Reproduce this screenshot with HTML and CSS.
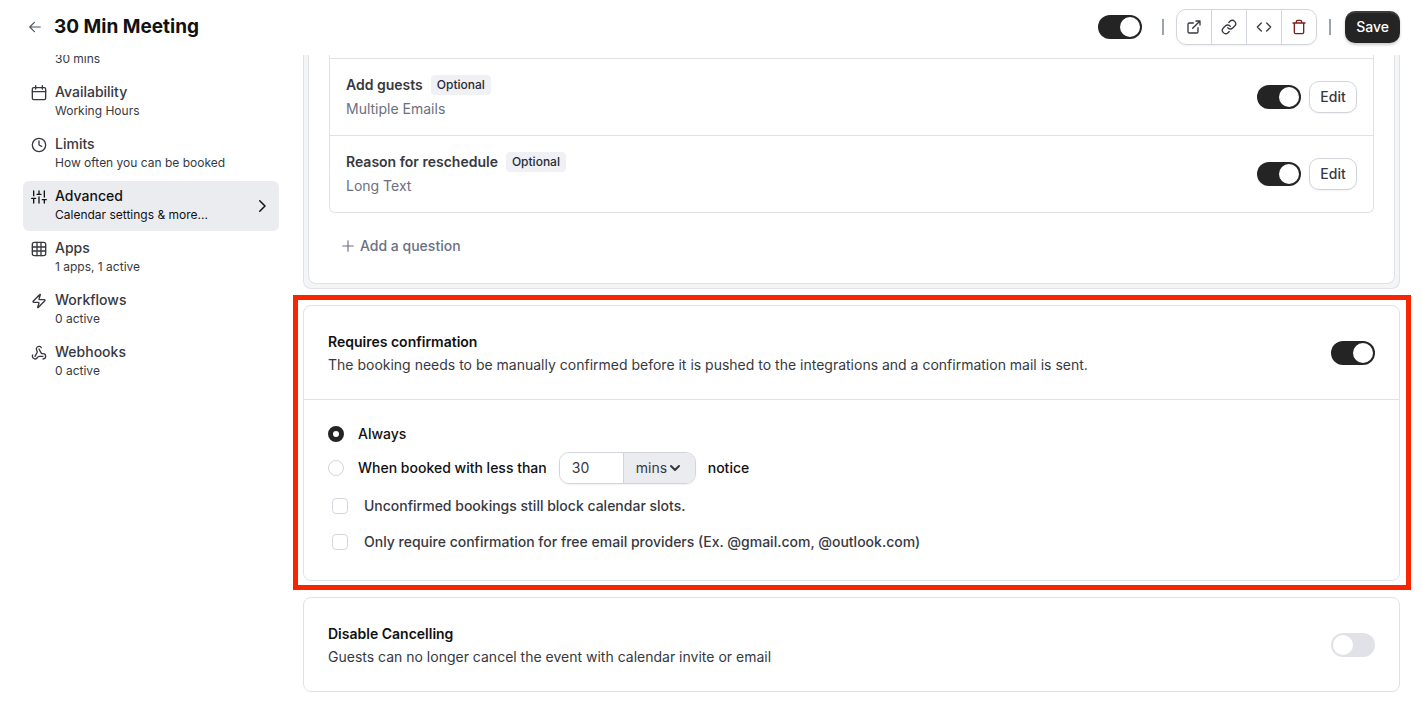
FILE: index.html
```
<!DOCTYPE html>
<html lang="en">

<head>
    <meta charset="UTF-8">
    <meta name="viewport" content="width=device-width, initial-scale=1.0">
    <title>30 Min Meeting</title>
    <link rel="stylesheet" href="styles.css">
</head>

<body>

    <header class="topbar">
        <a href="#" class="back" aria-label="Back">
            <svg class="icon-back" viewBox="0 0 24 24"><path d="m11 20-8-8 8-8M21 12H3" /></svg>
        </a>
        <h1>30 Min Meeting</h1>
        <div class="actions">
            <input type="checkbox" role="switch" class="toggle" aria-label="Event enabled" checked>
            <span class="separator separator-first"></span>
            <div class="button-group">
                <button type="button" aria-label="Preview">
                    <svg viewBox="0 0 24 24"><path d="M18 13v6a2 2 0 0 1-2 2H5a2 2 0 0 1-2-2V8a2 2 0 0 1 2-2h6M15 3h6v6M10 14 21 3" /></svg>
                </button>
                <button type="button" aria-label="Copy link">
                    <svg viewBox="0 0 24 24"><path d="M10 13a5 5 0 0 0 7.54.54l3-3a5 5 0 0 0-7.07-7.07l-1.72 1.71" /><path d="M14 11a5 5 0 0 0-7.54-.54l-3 3a5 5 0 0 0 7.07 7.07l1.71-1.71" /></svg>
                </button>
                <button type="button" aria-label="Embed">
                    <svg viewBox="0 0 24 24"><path d="m16 18 6-6-6-6M8 6l-6 6 6 6" /></svg>
                </button>
                <button type="button" class="danger" aria-label="Delete">
                    <svg viewBox="0 0 24 24"><path d="M3 6h18M19 6v14a2 2 0 0 1-2 2H7a2 2 0 0 1-2-2V6M8 6V4a2 2 0 0 1 2-2h4a2 2 0 0 1 2 2v2" /></svg>
                </button>
            </div>
            <span class="separator"></span>
            <button type="button" class="save">Save</button>
        </div>
    </header>

    <div class="layout">
        <nav class="sidebar">
            <a href="#" class="nav-item nav-first">
                <span class="nav-text"><span class="nav-info">30 mins</span></span>
            </a>
            <a href="#" class="nav-item">
                <svg viewBox="0 0 24 24"><rect x="2" y="4" width="20" height="18" rx="2" /><path d="M17 1v5M7 1v5M2 10h20" /></svg>
                <span class="nav-text"><span class="nav-name">Availability</span><span class="nav-info">Working Hours</span></span>
            </a>
            <a href="#" class="nav-item">
                <svg viewBox="0 0 24 24"><circle cx="12" cy="12" r="10" /><path d="M12 6v6l4 2" /></svg>
                <span class="nav-text"><span class="nav-name">Limits</span><span class="nav-info">How often you can be booked</span></span>
            </a>
            <a href="#" class="nav-item active" aria-current="page">
                <svg viewBox="0 0 24 24"><path d="M4 21v-7M4 10V3M12 21v-9M12 8V3M20 21v-5M20 12V3M1 14h6M9 8h6M17 16h6" /></svg>
                <span class="nav-text"><span class="nav-name">Advanced</span><span class="nav-info">Calendar settings &amp; more...</span></span>
                <svg class="chevron" viewBox="0 0 24 24"><path d="m9 19 7-7-7-7" /></svg>
            </a>
            <a href="#" class="nav-item">
                <svg viewBox="0 0 24 24"><rect x="2" y="2" width="20" height="20" rx="3" /><path d="M2 9h20M2 15h20M9 2v20M15 2v20" /></svg>
                <span class="nav-text"><span class="nav-name">Apps</span><span class="nav-info">1 apps, 1 active</span></span>
            </a>
            <a href="#" class="nav-item">
                <svg viewBox="0 0 24 24"><path d="M4 14a1 1 0 0 1-.78-1.63l9.9-10.2a.5.5 0 0 1 .86.46l-1.92 6.02A1 1 0 0 0 13 10h7a1 1 0 0 1 .78 1.63l-9.9 10.2a.5.5 0 0 1-.86-.46l1.92-6.02A1 1 0 0 0 11 14z" /></svg>
                <span class="nav-text"><span class="nav-name">Workflows</span><span class="nav-info">0 active</span></span>
            </a>
            <a href="#" class="nav-item">
                <svg viewBox="0 0 24 24"><path d="M18 16.98h-5.99c-1.1 0-1.95.94-2.48 1.9A4 4 0 0 1 2 17c.01-.7.2-1.4.57-2" /><path d="m6 17 3.13-5.78c.53-.97.1-2.18-.5-3.1a4 4 0 1 1 6.89-4.06" /><path d="m12 6 3.13 5.73C15.66 12.7 16.9 13 18 13a4 4 0 0 1 0 8" /></svg>
                <span class="nav-text"><span class="nav-name">Webhooks</span><span class="nav-info">0 active</span></span>
            </a>
        </nav>

        <main>
            <section class="questions">
                <div class="questions-inner">
                    <ul class="question-list">
                        <li>
                            <div class="question">
                                <div class="question-name">Add guests <span class="badge">Optional</span></div>
                                <div class="question-type">Multiple Emails</div>
                            </div>
                            <input type="checkbox" role="switch" class="toggle" aria-label="Add guests" checked>
                            <button type="button" class="edit">Edit</button>
                        </li>
                        <li>
                            <div class="question">
                                <div class="question-name">Reason for reschedule <span class="badge">Optional</span></div>
                                <div class="question-type">Long Text</div>
                            </div>
                            <input type="checkbox" role="switch" class="toggle" aria-label="Reason for reschedule" checked>
                            <button type="button" class="edit">Edit</button>
                        </li>
                    </ul>
                    <button type="button" class="add-question">
                        <svg viewBox="0 0 24 24"><path d="M3 12h18M12 3v18" /></svg>
                        Add a question
                    </button>
                </div>
            </section>

            <section class="card highlighted">
                <div class="card-header">
                    <div>
                        <h2 id="confirmation">Requires confirmation</h2>
                        <p>The booking needs to be manually confirmed before it is pushed to the integrations and a confirmation mail is sent.</p>
                    </div>
                    <input type="checkbox" role="switch" class="toggle" aria-labelledby="confirmation" checked>
                </div>
                <div class="card-body">
                    <div class="radio-row">
                        <input type="radio" name="confirm" id="always" checked>
                        <label for="always">Always</label>
                    </div>
                    <div class="radio-row notice-row">
                        <input type="radio" name="confirm" id="less-than">
                        <label for="less-than">When booked with less than</label>
                        <div class="duration">
                            <input type="text" value="30" aria-label="Notice time">
                            <div class="unit">
                                <select aria-label="Notice unit">
                                    <option>mins</option>
                                </select>
                                <svg viewBox="0 0 24 24"><path d="m4 8 8 8 8-8" /></svg>
                            </div>
                        </div>
                        <span>notice</span>
                    </div>
                    <div class="check-row">
                        <input type="checkbox" id="block-slots">
                        <label for="block-slots">Unconfirmed bookings still block calendar slots.</label>
                    </div>
                    <div class="check-row">
                        <input type="checkbox" id="free-email">
                        <label for="free-email">Only require confirmation for free email providers (Ex. @gmail.com, @outlook.com)</label>
                    </div>
                </div>
            </section>

            <section class="card">
                <div class="card-header">
                    <div>
                        <h2 id="cancelling">Disable Cancelling</h2>
                        <p>Guests can no longer cancel the event with calendar invite or email</p>
                    </div>
                    <input type="checkbox" role="switch" class="toggle" aria-labelledby="cancelling">
                </div>
            </section>
        </main>
    </div>

</body>

</html>
```
FILE: styles.css
```
* {
    box-sizing: border-box;
}

body {
    margin: 0;
    background-color: #fff;
    color: #37393f;
    font-family: Inter, "Liberation Sans", sans-serif;
    font-size: 14px;
    line-height: 20px;
}

h1,
h2,
p,
ul {
    margin: 0;
    padding: 0;
}

a {
    color: inherit;
    text-decoration: none;
}

button,
input,
select {
    margin: 0;
    font: inherit;
    color: inherit;
}

button {
    cursor: pointer;
}

svg {
    flex: none;
    width: 16px;
    height: 16px;
    fill: none;
    stroke: currentColor;
    stroke-width: 2;
    stroke-linecap: round;
    stroke-linejoin: round;
}

/* top bar */
.topbar {
    position: sticky;
    top: 0;
    z-index: 2;
    display: flex;
    align-items: center;
    height: 55px;
    padding: 0 22px 1px 28px;
    background-color: #fff;
}

.back {
    display: flex;
    margin-right: 12px;
    color: #4b5563;
}

.icon-back {
    width: 14px;
    height: 14px;
}

h1 {
    color: #111;
    font-size: 19px;
    font-weight: 700;
    line-height: 24px;
}

.actions {
    display: flex;
    align-items: center;
    gap: 12px;
    margin-left: auto;
}

.separator {
    width: 2px;
    height: 16px;
    background-color: #9ca3af;
}

.separator-first {
    margin-left: 8px;
}

.button-group {
    display: flex;
    border: 1px solid #d1d5db;
    border-radius: 10px;
    box-shadow: 0 1px 2px rgba(0, 0, 0, 0.06);
}

.button-group button {
    display: flex;
    align-items: center;
    justify-content: center;
    width: 35px;
    height: 34px;
    padding: 0;
    border: none;
    border-right: 1px solid #d1d5db;
    background: none;
}

.button-group button:last-child {
    width: 34px;
    border-right: none;
}

.button-group .danger {
    color: #7f1d1d;
}

.save {
    height: 32px;
    margin-left: 2px;
    padding: 0 11px;
    border: none;
    border-radius: 10px;
    background-color: #242424;
    color: #fff;
    font-weight: 500;
    box-shadow: 0 2px 3px rgba(0, 0, 0, 0.2), inset 0 2px 1px rgba(255, 255, 255, 0.12);
}

/* switches */
.toggle {
    appearance: none;
    flex: none;
    width: 44px;
    height: 24px;
    padding: 2px;
    border-radius: 12px;
    background-color: #e1e2e8;
    cursor: pointer;
}

.toggle::before {
    content: "";
    display: block;
    width: 20px;
    height: 20px;
    border-radius: 50%;
    background-color: #fff;
}

.toggle:checked {
    background-color: #242424;
}

.toggle:checked::before {
    margin-left: auto;
}

/* page */
.layout {
    display: flex;
    gap: 24px;
    padding: 0 22px 10px 23px;
}

.sidebar {
    display: flex;
    flex: none;
    flex-direction: column;
    gap: 2px;
    width: 256px;
    margin-top: -30px;
}

.nav-item {
    display: flex;
    gap: 8px;
    padding: 6px 8px;
    border-radius: 6px;
}

.nav-item svg {
    margin-top: 2px;
}

.nav-item.active {
    background-color: #ebecf0;
    color: #111;
}

.nav-first {
    height: 50px;
    align-items: flex-end;
    padding-left: 32px;
}

.nav-text {
    display: flex;
    flex: 1;
    flex-direction: column;
}

.nav-name {
    font-weight: 500;
    line-height: 18px;
}

.nav-info {
    font-size: 12px;
}

.nav-item .chevron {
    width: 18px;
    height: 18px;
    margin: auto 0;
}

main {
    flex: 1;
    display: flex;
    flex-direction: column;
    gap: 16px;
}

/* booking questions */
.questions {
    padding: 0 4px 4px;
    border: 1px solid #e1e2e6;
    border-top: none;
    border-radius: 0 0 8px 8px;
    background-color: #f4f5f7;
}

.questions-inner {
    padding: 0 20px 20px;
    border: 1px solid #e1e2e6;
    border-top: none;
    border-radius: 0 0 8px 8px;
    background-color: #fff;
}

.question-list {
    padding-top: 3px;
    border: 1px solid #e1e2e6;
    border-top: none;
    border-radius: 0 0 6px 6px;
    list-style: none;
}

.question-list li {
    display: flex;
    align-items: center;
    gap: 8px;
    padding: 16px;
    border-top: 1px solid #e1e2e6;
}

.question {
    flex: 1;
}

.question-name {
    display: flex;
    gap: 8px;
    font-weight: 600;
}

.badge {
    padding: 0 6px;
    border-radius: 4px;
    background-color: #f0f1f5;
    color: #262b36;
    font-size: 12px;
    font-weight: 500;
}

.question-type {
    margin-top: 4px;
    color: #6b7080;
}

.edit {
    width: 48px;
    height: 32px;
    padding: 0;
    border: 1px solid #d1d5db;
    border-radius: 10px;
    background-color: #fff;
    font-weight: 500;
    box-shadow: 0 1px 2px rgba(0, 0, 0, 0.06);
}

.add-question {
    display: flex;
    align-items: center;
    gap: 5px;
    height: 34px;
    margin-top: 16px;
    padding: 0 12px;
    border: none;
    background: none;
    color: #6b7080;
    font-weight: 500;
}

.add-question svg {
    width: 14px;
    height: 14px;
}

/* cards */
.card {
    border: 1px solid #e1e2e6;
    border-radius: 8px;
}

.card-header {
    display: flex;
    align-items: center;
    justify-content: space-between;
    padding: 24px;
}

h2 {
    color: #111;
    font-size: 14px;
    font-weight: 600;
    line-height: 24px;
}

.card p {
    line-height: 21px;
}

.card-body {
    padding: 24px 24px 28px;
    border-top: 1px solid #e1e2e6;
    font-weight: 500;
}

.highlighted {
    position: relative;
}

.highlighted::after {
    content: "";
    position: absolute;
    inset: -11px -12px -10px -11px;
    border: 5px solid #f92500;
    pointer-events: none;
}

.radio-row {
    display: flex;
    align-items: center;
    color: #111;
}

.radio-row label {
    margin-left: 14px;
}

.radio-row input[type="radio"] {
    appearance: none;
    width: 16px;
    height: 16px;
    border: 1px solid #d1d5db;
    border-radius: 50%;
}

.radio-row input[type="radio"]:checked {
    border: 5px solid #242424;
}

.notice-row {
    margin-top: 8px;
}

.duration {
    display: flex;
    height: 32px;
    margin: 0 12px;
    border: 1px solid #d1d5db;
    border-radius: 10px;
    overflow: hidden;
    color: #37393f;
    font-weight: 400;
    box-shadow: 0 1px 2px rgba(0, 0, 0, 0.06);
}

.duration input {
    width: 64px;
    padding: 0 12px;
    border: none;
    border-right: 1px solid #d1d5db;
    background-color: #fff;
}

.unit {
    display: flex;
    align-items: center;
    gap: 1px;
    padding: 0 14px 0 12px;
    background-color: #ebecf0;
}

.unit select {
    appearance: none;
    padding: 0;
    border: none;
    background: none;
}

.unit svg {
    width: 12px;
    height: 12px;
    stroke-width: 4;
}

.check-row {
    display: flex;
    align-items: center;
    gap: 16px;
    margin-top: 16px;
    padding-left: 4px;
}

.notice-row + .check-row {
    margin-top: 12px;
}

.check-row input {
    appearance: none;
    width: 16px;
    height: 16px;
    border: 1px solid #d1d5db;
    border-radius: 4px;
}
```
